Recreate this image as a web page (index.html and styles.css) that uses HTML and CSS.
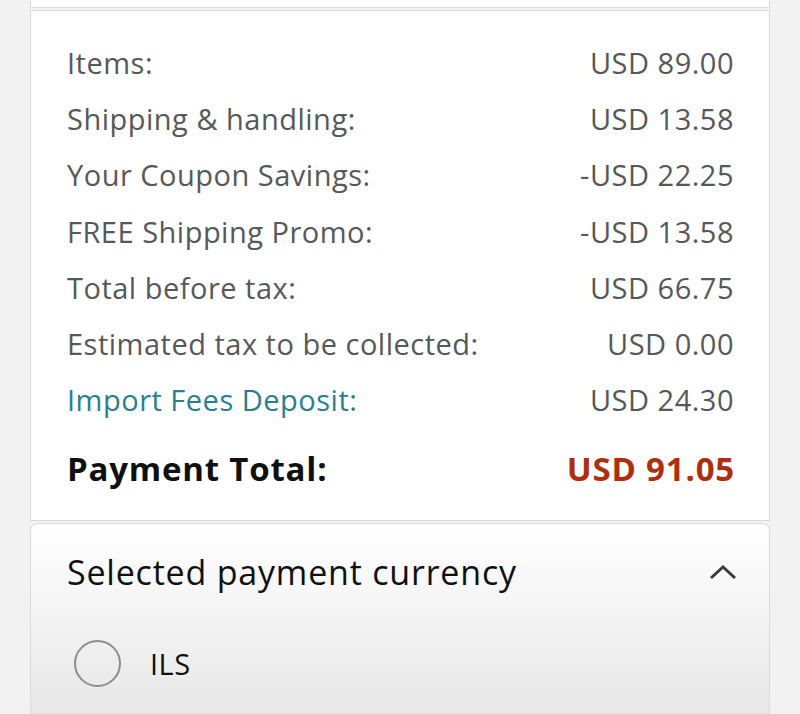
FILE: index.html
```html
<!DOCTYPE html>
<html lang="en">
<head>
    <meta charset="UTF-8">
    <meta name="viewport" content="width=device-width, initial-scale=1.0">
    <title>Order summary</title>
    <link rel="stylesheet" href="styles.css">
</head>
<body>

<div class="page">
    <div class="card card-top"></div>

    <div class="card summary">
        <div class="row"><span>Items:</span><span>USD 89.00</span></div>
        <div class="row"><span>Shipping &amp; handling:</span><span>USD 13.58</span></div>
        <div class="row"><span>Your Coupon Savings:</span><span>-USD 22.25</span></div>
        <div class="row"><span>FREE Shipping Promo:</span><span>-USD 13.58</span></div>
        <div class="row"><span>Total before tax:</span><span>USD 66.75</span></div>
        <div class="row"><span>Estimated tax to be collected:</span><span>USD 0.00</span></div>
        <div class="row"><a class="link" href="#">Import Fees Deposit:</a><span>USD 24.30</span></div>
        <div class="row total"><span>Payment Total:</span><span class="price">USD 91.05</span></div>
    </div>

    <div class="card currency">
        <div class="currency-header">
            <span>Selected payment currency</span>
            <svg class="chevron" width="30" height="18" viewBox="0 0 30 18">
                <path d="M3 15 L15 4 L27 15" fill="none" stroke="#3a3a3a" stroke-width="3"/>
            </svg>
        </div>
        <label class="option">
            <span class="radio"></span>
            <span>ILS</span>
        </label>
    </div>
</div>

</body>
</html>
```

FILE: styles.css
```css
body {
    margin: 0;
    background-color: #f2f2f2;
    font-family: "Open Sans", "Liberation Sans", Arial, sans-serif;
    color: #565959;
}

.page {
    padding: 0 30px;
    display: flex;
    flex-direction: column;
    gap: 2px;
}

.card {
    background-color: #fff;
    border: 1px solid #dadada;
}

.card-top {
    border-top: none;
    height: 7px;
}

.summary {
    padding: 23px 35px 24px 36px;
}

.row {
    display: flex;
    justify-content: space-between;
    align-items: center;
    height: 56.3px;
    font-size: 29px;
    letter-spacing: 0.5px;
}

.link {
    color: #2a7f8f;
    text-decoration: none;
}

.total {
    margin-top: 12px;
    height: 56px;
    font-size: 33px;
    font-weight: bold;
    letter-spacing: 0.8px;
    color: #0f1111;
}

.price {
    color: #ad2f10;
    margin-right: -1px;
}

.currency {
    border-radius: 8px;
    background: linear-gradient(to bottom, #ffffff, #e6e6e6 200px);
    padding: 0 31px 0 36px;
    height: 220px;
}

.currency-header {
    display: flex;
    justify-content: space-between;
    align-items: center;
    height: 96px;
    font-size: 34px;
    letter-spacing: 0.8px;
    color: #0f1111;
}

.option {
    display: flex;
    align-items: center;
    gap: 29px;
    padding-top: 20px;
    font-size: 29px;
    letter-spacing: 0.5px;
    color: #0f1111;
}

.radio {
    width: 47px;
    height: 47px;
    margin-left: 7px;
    border: 2px solid #8d8d8d;
    border-radius: 50%;
    box-sizing: border-box;
}
```
